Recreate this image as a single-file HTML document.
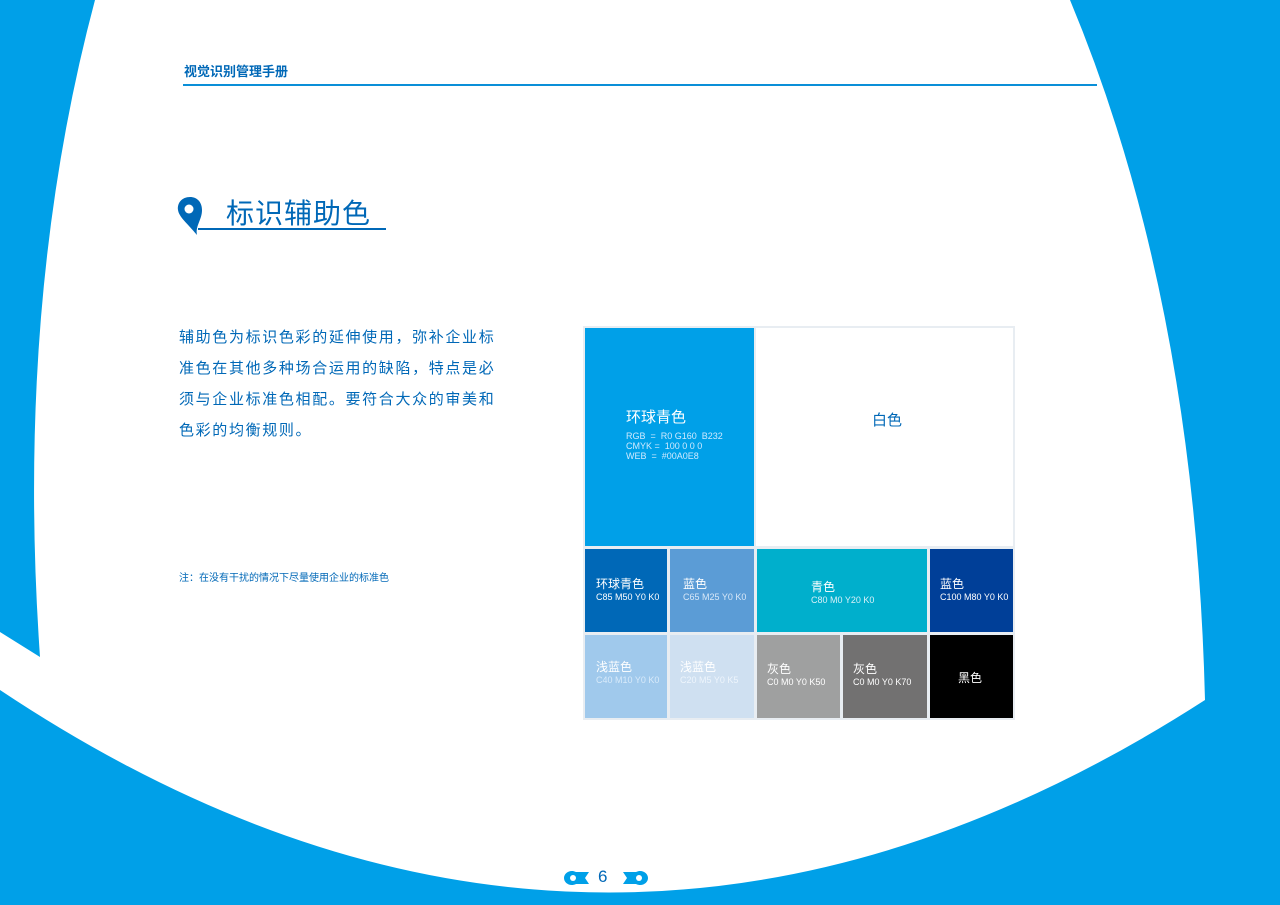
<!DOCTYPE html>
<html><head><meta charset="utf-8"><style>
*{margin:0;padding:0;box-sizing:border-box}
body{width:1280px;height:905px;overflow:hidden;position:relative;background:#00a0e8;font-family:"Liberation Sans","Noto Sans CJK SC",sans-serif}
svg.bg{position:absolute;left:0;top:0}
.a{position:absolute}
.c{position:absolute;color:#fff;font-size:12px;line-height:15px}
.c small{display:block;font-size:9px;line-height:11px}
</style></head><body>
<svg class="bg" width="1280" height="905"><path d="M95,0 L1070,0 Q1195,300 1205,700 Q600,1090 0,690 L0,632 L40,657 Q15,300 95,0 Z" fill="#fff"/></svg>
<div class="a" style="left:184px;top:61px;font-size:13px;font-weight:bold;color:#0068b7">视觉识别管理手册</div>
<div class="a" style="left:183px;top:84px;width:914px;height:2px;background:#0a8fd8"></div>
<svg class="a" style="left:177px;top:196px" width="32" height="42"><path d="M13,1 C5,1 0,7 1,14 C2,21 10,27 20,39 C18,30 25,24 25,14 C25,6 20,1 13,1Z" fill="#0068b7"/><circle cx="12" cy="13" r="4.5" fill="#fff"/></svg>
<div class="a" style="left:226px;top:192px;font-size:28px;color:#0068b7;letter-spacing:1px">标识辅助色</div>
<div class="a" style="left:198px;top:228px;width:188px;height:2px;background:#0068b7"></div>
<div class="a" style="left:179px;top:322px;width:326px;font-size:15px;line-height:31px;letter-spacing:1.65px;color:#0068b7">辅助色为标识色彩的延伸使用，弥补企业标准色在其他多种场合运用的缺陷，特点是必须与企业标准色相配。要符合大众的审美和色彩的均衡规则。</div>
<div class="a" style="left:179px;top:569px;font-size:10px;color:#0068b7">注：在没有干扰的情况下尽量使用企业的标准色</div>
<div class="a" style="left:583px;top:326px;width:432px;height:394px;background:#e8edf2"></div>
<div class="a" style="left:585px;top:328px;width:169px;height:218px;background:#00a0e8"></div>
<div class="a" style="left:756px;top:328px;width:257px;height:218px;background:#fff"></div>
<div class="c" style="left:626px;top:409px;font-size:15px;line-height:18px">环球青色<small style="margin-top:4px;font-size:9px;line-height:10px;color:#cfeaff">RGB &nbsp;= &nbsp;R0 G160 &nbsp;B232<br>CMYK = &nbsp;100 0 0 0<br>WEB &nbsp;= &nbsp;#00A0E8</small></div>
<div class="a" style="left:872px;top:409px;font-size:15px;color:#0068b7">白色</div>
<div class="a" style="left:585px;top:549px;width:82px;height:83px;background:#0068b7"></div>
<div class="a" style="left:670px;top:549px;width:84px;height:83px;background:#5b9cd6"></div>
<div class="a" style="left:757px;top:549px;width:170px;height:83px;background:#00afcc"></div>
<div class="a" style="left:930px;top:549px;width:83px;height:83px;background:#003f98"></div>
<div class="a" style="left:585px;top:635px;width:82px;height:83px;background:#a0c9ec"></div>
<div class="a" style="left:670px;top:635px;width:84px;height:83px;background:#cfe0f1"></div>
<div class="a" style="left:757px;top:635px;width:83px;height:83px;background:#9fa0a0"></div>
<div class="a" style="left:843px;top:635px;width:84px;height:83px;background:#727171"></div>
<div class="a" style="left:930px;top:635px;width:83px;height:83px;background:#000"></div>
<div class="c" style="left:596px;top:577px">环球青色<small>C85 M50 Y0 K0</small></div>
<div class="c" style="left:683px;top:577px">蓝色<small style="color:#d8e8f8">C65 M25 Y0 K0</small></div>
<div class="c" style="left:811px;top:580px">青色<small style="color:#d8f0f8">C80 M0 Y20 K0</small></div>
<div class="c" style="left:940px;top:577px">蓝色<small>C100 M80 Y0 K0</small></div>
<div class="c" style="left:596px;top:660px">浅蓝色<small style="color:#d8eafa">C40 M10 Y0 K0</small></div>
<div class="c" style="left:680px;top:660px">浅蓝色<small style="color:#eef5fc">C20 M5 Y0 K5</small></div>
<div class="c" style="left:767px;top:662px">灰色<small>C0 M0 Y0 K50</small></div>
<div class="c" style="left:853px;top:662px">灰色<small>C0 M0 Y0 K70</small></div>
<div class="c" style="left:958px;top:671px">黑色</div>
<svg class="a" style="left:562px;top:868px" width="30" height="20"><path d="M27,4 L14,4 C8,1 2,5 2,10 C2,15 8,19 14,16 L27,16 L23,10 Z" fill="#00a0e8"/><circle cx="11" cy="10" r="3" fill="#fff"/></svg>
<div class="a" style="left:598px;top:867px;font-size:17px;color:#0068b7">6</div>
<svg class="a" style="left:620px;top:868px" width="30" height="20"><path d="M3,4 L16,4 C22,1 28,5 28,10 C28,15 22,19 16,16 L3,16 L7,10 Z" fill="#00a0e8"/><circle cx="19" cy="10" r="3" fill="#fff"/></svg>
</body></html>
